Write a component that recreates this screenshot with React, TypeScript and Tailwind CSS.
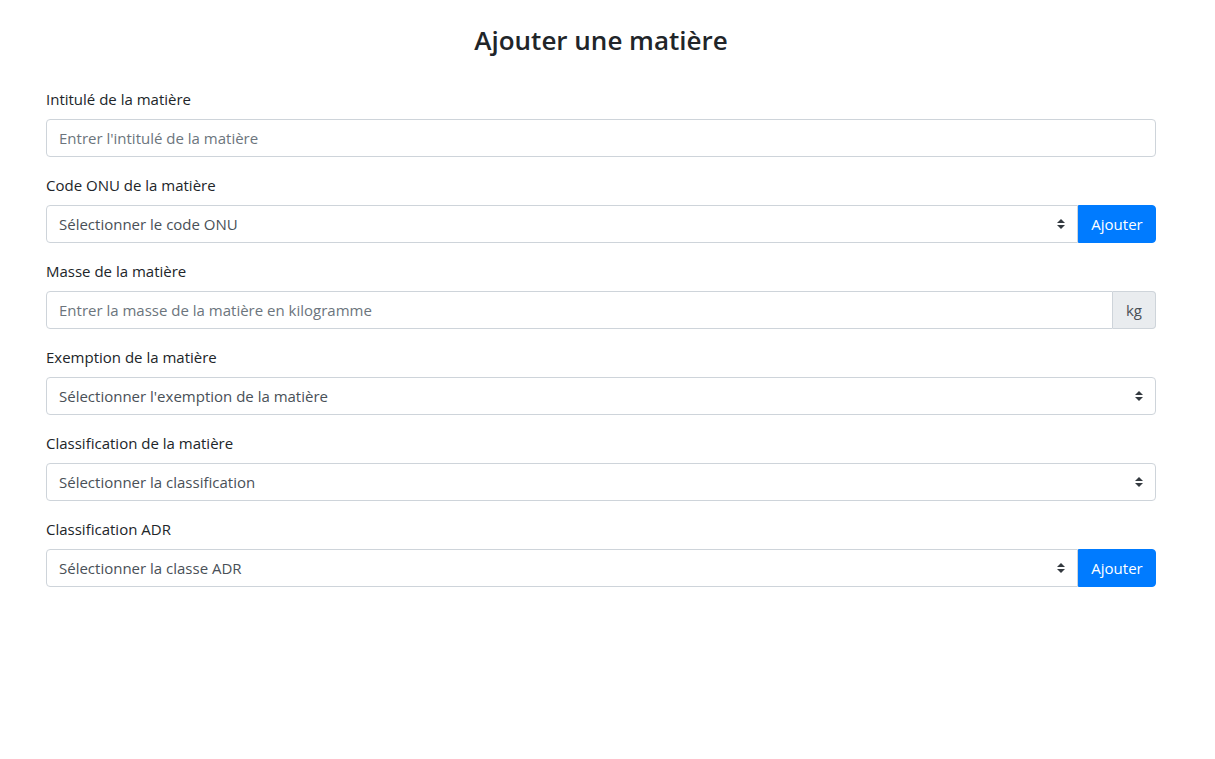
import React from 'react';

const font = { fontFamily: '"Open Sans", "Noto Sans", sans-serif' };

function Arrows() {
  return (
    <svg width="8" height="10" viewBox="0 0 4 5" className="shrink-0">
      <path fill="#343a40" d="M2 0L0 2h4zm0 5L0 3h4z" />
    </svg>
  );
}

function Label({ children }: { children: React.ReactNode }) {
  return <label className="block mb-2 text-[15px] leading-6 text-[#212529]">{children}</label>;
}

function TextInput({ placeholder, rounded = 'rounded' }: { placeholder: string; rounded?: string }) {
  return (
    <input
      placeholder={placeholder}
      className={`flex-1 min-w-0 h-[38px] px-3 border border-[#ced4da] ${rounded} text-[15px] text-[#495057] placeholder:text-[#6c757d] outline-none`}
      style={font}
    />
  );
}

function Select({ text, rounded = 'rounded' }: { text: string; rounded?: string }) {
  return (
    <div className={`flex-1 min-w-0 h-[38px] pl-3 pr-3 border border-[#ced4da] ${rounded} flex items-center justify-between text-[15px] text-[#495057]`}>
      <span>{text}</span>
      <Arrows />
    </div>
  );
}

function AddButton() {
  return (
    <button className="h-[38px] w-[78px] bg-[#007bff] text-white text-[15px] rounded-r border border-[#007bff]" style={font}>
      Ajouter
    </button>
  );
}

export default function App() {
  return (
    <div className="min-h-screen bg-white" style={font}>
      <div className="w-[1110px] ml-[46px] pt-[23px]">
        <h3 className="text-center text-[26px] leading-[34px] font-semibold text-[#212529] mb-[30px]">
          Ajouter une matière
        </h3>

        <div className="mb-4">
          <Label>Intitulé de la matière</Label>
          <div className="flex">
            <TextInput placeholder="Entrer l'intitulé de la matière" />
          </div>
        </div>

        <div className="mb-4">
          <Label>Code ONU de la matière</Label>
          <div className="flex">
            <Select text="Sélectionner le code ONU" rounded="rounded-l" />
            <AddButton />
          </div>
        </div>

        <div className="mb-4">
          <Label>Masse de la matière</Label>
          <div className="flex">
            <TextInput placeholder="Entrer la masse de la matière en kilogramme" rounded="rounded-l" />
            <div className="h-[38px] w-[43px] flex items-center justify-center bg-[#e9ecef] border border-l-0 border-[#ced4da] rounded-r text-[15px] text-[#495057]">
              kg
            </div>
          </div>
        </div>

        <div className="mb-4">
          <Label>Exemption de la matière</Label>
          <div className="flex">
            <Select text="Sélectionner l'exemption de la matière" />
          </div>
        </div>

        <div className="mb-4">
          <Label>Classification de la matière</Label>
          <div className="flex">
            <Select text="Sélectionner la classification" />
          </div>
        </div>

        <div className="mb-4">
          <Label>Classification ADR</Label>
          <div className="flex">
            <Select text="Sélectionner la classe ADR" rounded="rounded-l" />
            <AddButton />
          </div>
        </div>
      </div>
    </div>
  );
}
